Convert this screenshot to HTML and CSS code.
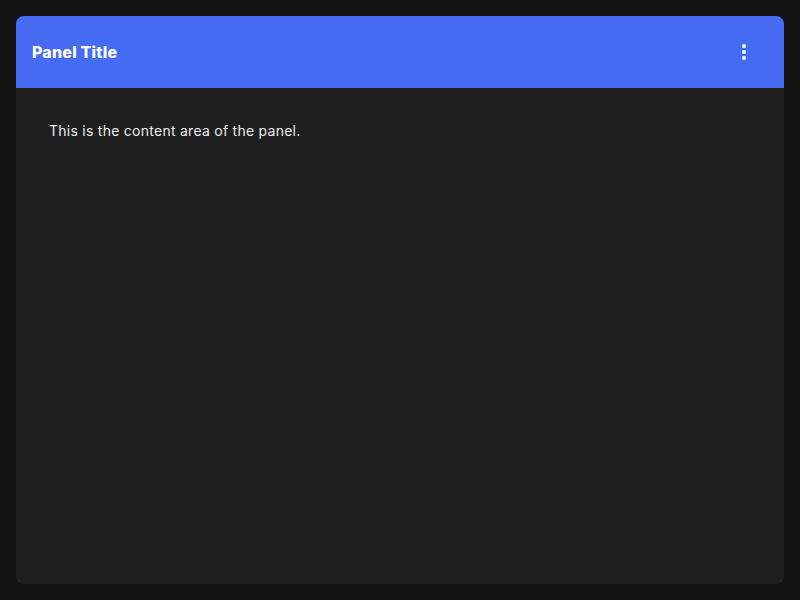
FILE: index.html
```html
<!DOCTYPE html>
<html>
<head>
<meta charset="utf-8">
<link rel="stylesheet" href="styles.css">
</head>
<body>
<div class="panel">
  <div class="panel-header">
    <h1 class="panel-title">Panel Title</h1>
    <button class="menu-btn" aria-label="More">
      <svg width="4" height="16" viewBox="0 0 4 16"><circle cx="2" cy="2" r="2" fill="#fff"/><circle cx="2" cy="8" r="2" fill="#fff"/><circle cx="2" cy="14" r="2" fill="#fff"/></svg>
    </button>
  </div>
  <div class="panel-body">
    <p class="panel-text">This is the content area of the panel.</p>
  </div>
</div>
</body>
</html>
```
FILE: styles.css
```css
html, body {
  margin: 0;
  height: 100%;
}
body {
  background: #121212;
  font-family: Inter, "Noto Sans", sans-serif;
  padding: 16px;
  box-sizing: border-box;
}
.panel {
  height: 100%;
  background: #1f1f1f;
  border-radius: 8px;
  overflow: hidden;
  display: flex;
  flex-direction: column;
}
.panel-header {
  height: 72px;
  background: #476cf4;
  display: flex;
  align-items: center;
  justify-content: space-between;
  padding: 0 16px;
  flex-shrink: 0;
}
.panel-title {
  margin: 0;
  color: #fff;
  font-size: 16px;
  font-weight: 800;
  letter-spacing: 0.2px;
}
.menu-btn {
  width: 48px;
  height: 40px;
  background: none;
  border: 0;
  padding: 0;
  display: flex;
  align-items: center;
  justify-content: center;
  cursor: pointer;
}
.panel-body {
  padding: 32px 32px 32px 33px;
  flex: 1;
}
.panel-text {
  margin: 0;
  color: #ececec;
  font-size: 14px;
  letter-spacing: 0.26px;
  line-height: 22px;
}
```
